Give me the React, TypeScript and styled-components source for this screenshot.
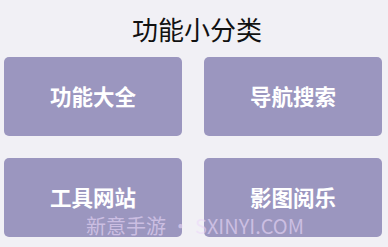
import styled, { createGlobalStyle } from "styled-components";

const GlobalStyle = createGlobalStyle`
  html, body {
    margin: 0;
    padding: 0;
    background: #f1f0f5;
  }
  body {
    font-family: "Noto Sans CJK SC", "Noto Sans", sans-serif;
  }
`;

const Page = styled.div`
  position: relative;
  width: 388px;
  height: 247px;
  padding: 0 6px 0 4px;
  box-sizing: border-box;
  overflow: hidden;
`;

const Title = styled.h1`
  margin: 0;
  height: 57px;
  display: flex;
  align-items: center;
  justify-content: center;
  padding-left: 8px;
  font-size: 26px;
  font-weight: 400;
  color: #111;
  box-sizing: border-box;
`;

const Grid = styled.div`
  display: grid;
  grid-template-columns: 178px 178px;
  grid-auto-rows: 79px;
  column-gap: 22px;
  row-gap: 22px;
`;

const Tile = styled.button`
  border: none;
  border-radius: 5px;
  background: #9b96bf;
  color: #fff;
  font-family: "Noto Sans CJK SC", sans-serif;
  font-size: 21.5px;
  font-weight: 700;
  display: flex;
  align-items: center;
  justify-content: center;
  padding: 0 0 2px;
  cursor: pointer;
`;

const Watermark = styled.div`
  position: absolute;
  left: 86px;
  top: 211px;
  font-family: "Noto Sans CJK SC", "Noto Sans", sans-serif;
  font-size: 20px;
  color: rgba(236, 218, 250, 0.6);
  white-space: nowrap;
  pointer-events: none;
`;

const items = ["功能大全", "导航搜索", "工具网站", "影图阅乐"];

export default function App() {
  return (
    <>
      <GlobalStyle />
      <Page>
        <Title>功能小分类</Title>
        <Grid>
          {items.map((label) => (
            <Tile key={label}>{label}</Tile>
          ))}
        </Grid>
        <Watermark>新意手游 • SXINYI.COM</Watermark>
      </Page>
    </>
  );
}
